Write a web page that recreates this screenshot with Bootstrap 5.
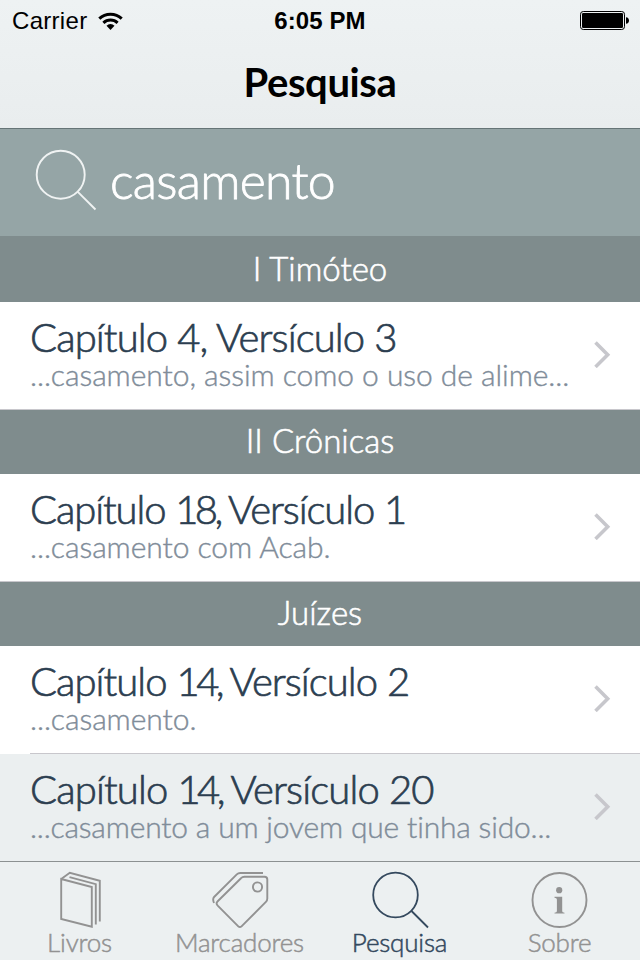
<!DOCTYPE html>
<html lang="pt">
<head>
<meta charset="utf-8">
<meta name="viewport" content="width=device-width, initial-scale=1">
<title>Pesquisa</title>
<link href="https://cdn.jsdelivr.net/npm/bootstrap@5.3.0/dist/css/bootstrap.min.css" rel="stylesheet">
<style>
body{width:640px;height:960px;overflow:hidden;background:#ecf0f1;font-family:Lato,sans-serif;font-weight:300;color:#2c3e50;white-space:nowrap;font-variant-ligatures:none}
.top-bar{height:129px;background:linear-gradient(#eef2f3,#e9edee);border-bottom:1px solid #667577;color:#000}
.status-bar{height:41px;font:400 24px/41px "Liberation Sans",sans-serif}
.status-bar .clock{font-weight:700;letter-spacing:.1px}
.carrier{letter-spacing:.3px}
.side{width:150px}
.page-title{font-size:40px;line-height:82px;font-weight:700;letter-spacing:-.4px}
.search-bar{height:107px;background:#95a5a6;padding:0 0 5px 35px}
.search-bar input{font-size:50px;line-height:60px;height:60px;width:480px;font-weight:300;color:#fff;letter-spacing:-.75px;margin:-1px 0 0 13px;-webkit-text-stroke:.8px}
.group-head{height:64px;line-height:61px;font-size:33px;background:#7f8c8d;color:#fff;-webkit-text-stroke:.6px}
.group-head.first{height:66px;line-height:65px}
.verse{height:108px;padding:15px 29px 0 30px;background:#fff;border-bottom:1px solid #c8c7cc}
.verse h2{font-size:40px;line-height:40px;font-weight:300;letter-spacing:-.95px;-webkit-text-stroke:.7px}
.verse h2.one{letter-spacing:-.88px}
.verse h2.end-one{letter-spacing:-1.1px}
.verse h2.twenty{letter-spacing:-.85px}
.verse h2 .tight{letter-spacing:-3.6px}
.verse p{font-size:30px;line-height:34px;color:#808c99;letter-spacing:-.05px;-webkit-text-stroke:.4px}
.verse.inset{border:0;background:linear-gradient(#c8c7cc,#c8c7cc) 30px 100%/610px 1px no-repeat #fff}
.verse.odd{height:107px;border:0;background:#ebeff0}
.verse.odd p{letter-spacing:-.18px}
.chev{margin-top:23px}
.tab-bar{height:99px;border-top:1px solid #8c9192;background:#ecf0f1;color:#929292}
.tab-bar a{width:160px;font-size:26px;line-height:26px;letter-spacing:-.2px;color:#929292;padding:9px 1px 0 0;-webkit-text-stroke:.5px}
.tab-bar a.active{color:#34495e}
</style>
</head>
<body class="d-flex flex-column">
<header class="top-bar flex-shrink-0">
  <div class="status-bar d-flex justify-content-between">
    <div class="side d-flex align-items-center ps-2"><span class="carrier ms-1">Carrier</span>
      <svg class="ms-2" width="30" height="20" viewBox="-1.5 -.5 30 20"><g fill="none" stroke="#000" stroke-width="3"><path d="M2.8 7.2a16.2 16.2 0 0 1 22.4 0"/><path d="M6.9 11.4a10.3 10.3 0 0 1 14.2 0"/></g><path d="M10 14.2a5.8 5.8 0 0 1 8 0L14 18.5z"/></svg>
    </div>
    <div class="clock">6:05 PM</div>
    <div class="side d-flex align-items-center justify-content-end pe-2">
      <svg width="52" height="20" viewBox="0 0 52 20"><rect x=".5" y=".5" width="44" height="18" rx="2.8" fill="none" stroke="#000"/><rect x="2" y="2" width="41" height="15" rx="1.2"/><path d="M46 6.2c4 .3 4 6.3 0 6.6z"/></svg>
    </div>
  </div>
  <h1 class="page-title text-center m-0">Pesquisa</h1>
</header>
<div class="search-bar d-flex align-items-center flex-shrink-0">
  <svg width="62" height="62" viewBox="0 0 62 62" fill="none" stroke="#f0f3f3" stroke-width="1.9"><circle cx="25.7" cy="25.7" r="24"/><path d="m42.8 42.8 17.7 17.7"/></svg>
  <input class="border-0 bg-transparent p-0" type="text" value="casamento" aria-label="Pesquisa">
</div>
<main class="flex-shrink-0">
  <div class="group-head first text-center">I Timóteo</div>
  <div class="verse d-flex justify-content-between"><div><h2 class="one m-0">Capítulo 4, Versículo 3</h2><p class="m-0">...casamento, assim como o uso de alime...</p></div>
    <svg class="chev" width="17" height="28" viewBox="0 0 17 28"><path d="m1.5 2.5 12.2 12.2-12.2 12.2" fill="none" stroke="#c7c7cc" stroke-width="3.6"/></svg></div>
  <div class="group-head text-center">II Crônicas</div>
  <div class="verse d-flex justify-content-between"><div><h2 class="end-one m-0">Capítulo <span class="tight">18,</span> Versículo 1</h2><p class="m-0">...casamento com Acab.</p></div>
    <svg class="chev" width="17" height="28" viewBox="0 0 17 28"><path d="m1.5 2.5 12.2 12.2-12.2 12.2" fill="none" stroke="#c7c7cc" stroke-width="3.6"/></svg></div>
  <div class="group-head text-center">Juízes</div>
  <div class="verse inset d-flex justify-content-between"><div><h2 class="m-0">Capítulo <span class="tight">14,</span> Versículo 2</h2><p class="m-0">...casamento.</p></div>
    <svg class="chev" width="17" height="28" viewBox="0 0 17 28"><path d="m1.5 2.5 12.2 12.2-12.2 12.2" fill="none" stroke="#c7c7cc" stroke-width="3.6"/></svg></div>
  <div class="verse odd d-flex justify-content-between"><div><h2 class="twenty m-0">Capítulo <span class="tight">14,</span> Versículo 20</h2><p class="m-0">...casamento a um jovem que tinha sido...</p></div>
    <svg class="chev" width="17" height="28" viewBox="0 0 17 28"><path d="m1.5 2.5 12.2 12.2-12.2 12.2" fill="none" stroke="#c7c7cc" stroke-width="3.6"/></svg></div>
</main>
<nav class="tab-bar d-flex flex-shrink-0">
  <a href="#" class="d-flex flex-column align-items-center text-decoration-none">
    <svg width="58" height="58" viewBox="-.5 0 58 58" fill="none" stroke="#929292" stroke-width="1.9"><path d="M9.7 8 40.3 16V55.7L9.7 48zM9.7 8 18.3 1.8 48.3 9.8V50.5"/><path d="M18 6.1 44.3 13.2V53.5"/></svg>
    <span>Livros</span></a>
  <a href="#" class="d-flex flex-column align-items-center text-decoration-none">
    <svg width="58" height="58" viewBox="-.5 0 58 58" fill="none" stroke="#929292" stroke-width="1.9" stroke-linejoin="round"><path d="M29.5 7.2q1.4-1.4 3.5-1.4H53q2.8 0 2.8 2.8V27.5q0 2-1.4 3.4L30 55.3q-1.6 1.6-3.2 0L6.2 34.7q-2.2-2.4 0-4.5z"/><path d="M51.5 2H28.7q-2 0-3.4 1.4L2.6 26Q.8 28 2.5 32"/><circle cx="46" cy="16" r="4.6"/></svg>
    <span>Marcadores</span></a>
  <a href="#" class="active d-flex flex-column align-items-center text-decoration-none">
    <svg width="58" height="58" viewBox="-.5 0 58 58" fill="none" stroke="#34495e" stroke-width="1.8"><circle cx="24" cy="24" r="22.3"/><path d="m40 40 16.5 16.5"/></svg>
    <span>Pesquisa</span></a>
  <a href="#" class="d-flex flex-column align-items-center text-decoration-none">
    <svg width="58" height="58" viewBox="-.5 0 58 58"><circle cx="28" cy="29" r="27" fill="none" stroke="#929292" stroke-width="1.9"/><g fill="#929292"><circle cx="27.7" cy="19.2" r="3.1"/><path d="M23 25.7h7.7v14.6q0 1.3 2.3 1.4v.9H23v-.9q2.4-.1 2.4-1.4V28.4q0-1.5-2.4-1.7z"/></g></svg>
    <span>Sobre</span></a>
</nav>
<script src="https://cdn.jsdelivr.net/npm/bootstrap@5.3.0/dist/js/bootstrap.bundle.min.js"></script>
</body>
</html>
